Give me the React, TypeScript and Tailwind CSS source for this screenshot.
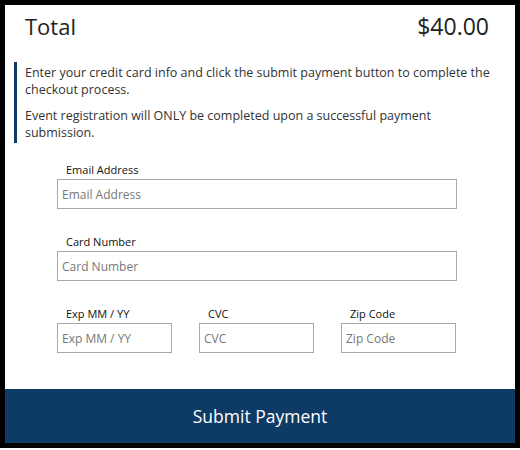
import React from 'react'

const font = { fontFamily: '"Open Sans", "Noto Sans", sans-serif' }

interface FieldProps {
  label: string;
  width: string;
}

const Field = ({ label, width }: FieldProps) => (
  <div className={`flex flex-col ${width}`}>
    <label className="pl-[9px] text-[11px] leading-[14px] text-[#111] mb-[2px]">{label}</label>
    <input
      placeholder={label}
      className="h-[30px] w-full border border-[#a9a9a9] px-[4px] text-[12px] text-[#333] placeholder:text-[#777] outline-none"
    />
  </div>
)

export default function App() {
  return (
    <div style={font} className="w-[520px] h-[448px] border-[5px] border-black bg-white flex flex-col">
      <div className="flex justify-between items-baseline pl-5 pr-[26px] pt-[6px]">
        <h2 className="text-[22px] leading-[30px] text-[#222]">Total</h2>
        <span className="text-[23px] leading-[30px] text-[#222]">$40.00</span>
      </div>

      <div className="ml-[9px] mr-[12px] mt-[21px] border-l-[3px] border-[#0e3a66] pl-[8px] py-[2px] text-[12.5px] leading-[17px] text-[#333]">
        <p>Enter your credit card info and click the submit payment button to complete the checkout process.</p>
        <p className="mt-[9px]">Event registration will ONLY be completed upon a successful payment submission.</p>
      </div>

      <form className="flex flex-col ml-[52px] w-[400px] mt-[20px] gap-[26px]" onSubmit={(e) => e.preventDefault()}>
        <Field label="Email Address" width="w-[400px]" />
        <Field label="Card Number" width="w-[400px]" />
        <div className="flex gap-[27px]">
          <Field label="Exp MM / YY" width="w-[115px]" />
          <Field label="CVC" width="w-[115px]" />
          <Field label="Zip Code" width="w-[115px]" />
        </div>
      </form>

      <button className="mt-auto h-[54px] w-full bg-[#0e3a66] text-white text-[17.5px]">
        Submit Payment
      </button>
    </div>
  )
}
